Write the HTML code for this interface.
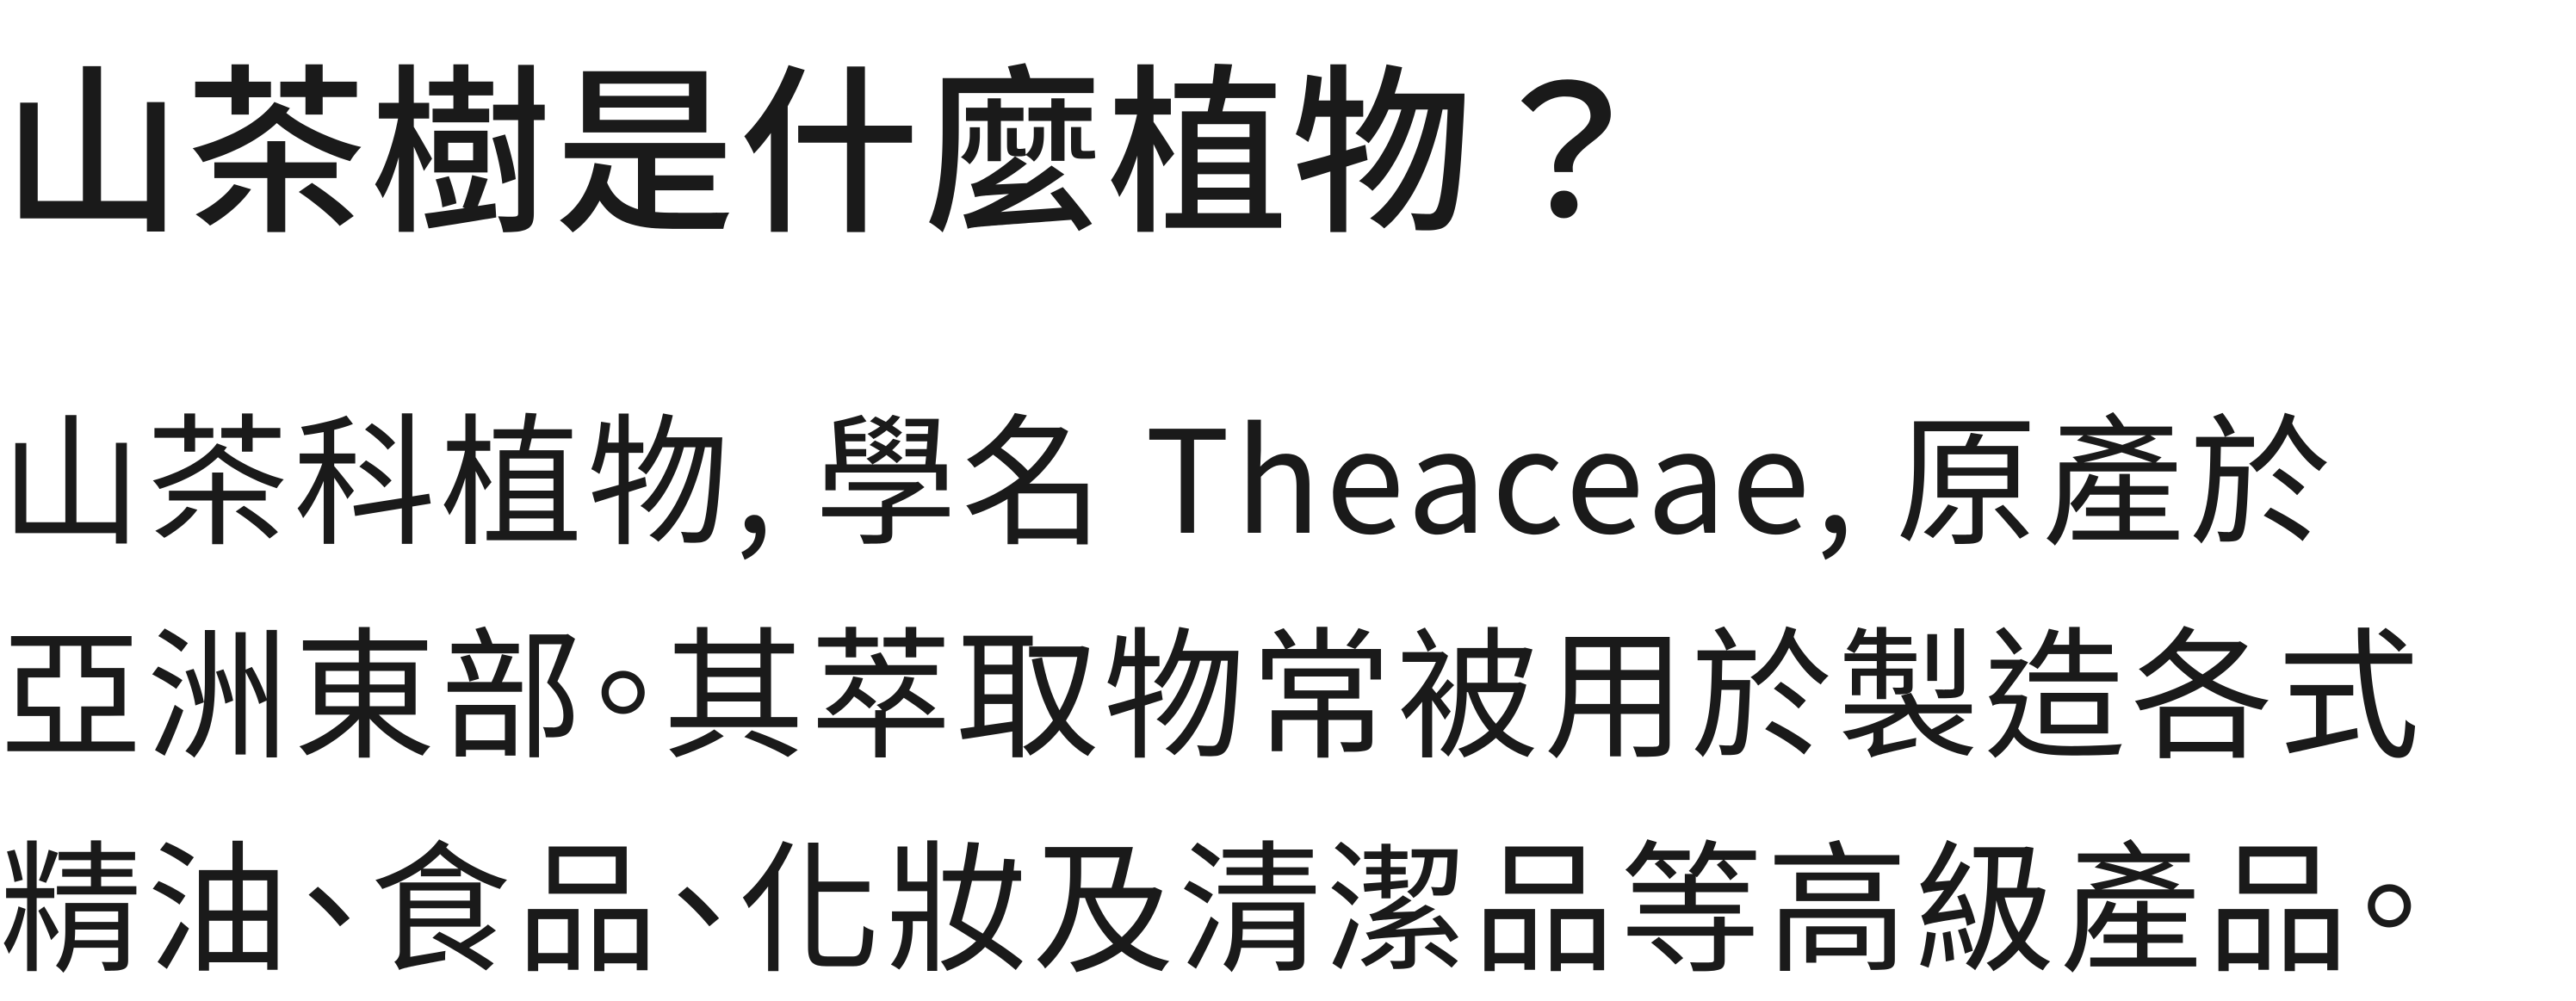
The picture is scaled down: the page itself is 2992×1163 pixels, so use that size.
<!DOCTYPE html>
<html><head><meta charset="utf-8"><style>
html,body{margin:0;padding:0;background:#fff;}
body{width:2992px;height:1152px;position:relative;overflow:hidden;}
.t{position:absolute;white-space:nowrap;line-height:1;color:#1a1a1a;font-family:"Noto Sans CJK TC","Liberation Sans",sans-serif;font-feature-settings:"halt";}
.h{left:2px;top:56px;font-size:210px;font-weight:500;letter-spacing:4px;}
.b{left:0px;font-size:165px;font-weight:400;letter-spacing:5.5px;}
</style></head><body>
<div class="t h">山茶樹是什麼植物？</div>
<div class="t b" style="top:465px">山茶科植物, 學名 Theaceae, 原產於</div>
<div class="t b" style="top:713px">亞洲東部。其萃取物常被用於製造各式</div>
<div class="t b" style="top:961px">精油、食品、化妝及清潔品等高級產品。</div>
</body></html>
